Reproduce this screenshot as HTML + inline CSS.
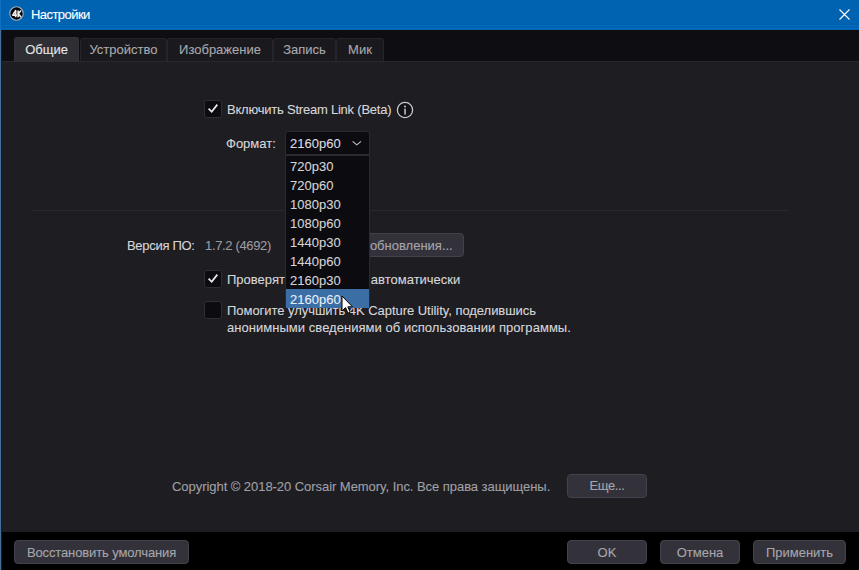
<!DOCTYPE html>
<html><head><meta charset="utf-8">
<style>
*{box-sizing:border-box;margin:0;padding:0}
html,body{width:859px;height:570px;overflow:hidden;background:#000}
body{position:relative;font-family:"Liberation Sans",sans-serif;font-size:13px;line-height:15px;color:#d7d7da;-webkit-text-stroke:0.1px}
.a{position:absolute;white-space:nowrap}
#title{left:0;top:0;width:859px;height:30px;background:#0063b1}
#lb{left:0;top:30px;width:1px;height:540px;background:#46709b;box-shadow:1px 0 0 #08203c}
#strip{left:1px;top:30px;width:858px;height:32px;background:#0e0d12}
#content{left:1px;top:62px;width:858px;height:470px;background:#1e1d22}
#footer{left:1px;top:532px;width:858px;height:38px;background:#000}
.tab{position:absolute;top:38px;height:23px;background:#1a191e;border:1px solid #25242a;border-bottom:none;border-radius:3px 3px 0 0;color:#a9a9ae;text-align:center;padding-top:3px}
.tab.act{top:37px;height:25px;background:#2f2e35;border-color:#34333a;color:#e6e6e8;padding-top:4px}
.cb{position:absolute;width:18px;height:18px;background:#0c0b0f;border:1px solid #2f2e34;border-radius:3px}
.btn{position:absolute;height:24px;background:#33323b;border:1px solid #43424a;border-radius:4px;color:#a6a6ac;text-align:center;padding-top:4px}
.dd{position:absolute;left:286px;width:83px;height:19px;color:#d4d4d8;padding-left:4px;padding-top:3px}
</style></head><body>
<div class="a" id="title"></div>
<div class="a" id="strip"></div>
<div class="a" id="content"></div>
<div class="a" style="left:1px;top:61px;width:858px;height:1px;background:#29282e"></div>
<div class="a" id="footer"></div>
<div class="a" id="lb"></div>
<div class="a" style="left:0;top:25px;width:859px;height:1px;background:#0468bb"></div>
<div class="a" style="left:0;top:28px;width:859px;height:1px;background:#066bc0"></div>
<div class="a" style="left:0;top:0;width:1px;height:30px;background:#1170c4"></div>

<!-- title bar -->
<svg class="a" style="left:9px;top:6px" width="15" height="15" viewBox="0 0 15 15">
  <circle cx="7.5" cy="7.5" r="6.7" fill="#040406" stroke="#9fb1c6" stroke-width="1.1"/>
  <path d="M6.7 11.2 V4.4 L3.7 9.1 H7.9 M9.1 4.4 V11.2 M12 4.4 L9.4 7.7 L12.1 11.2" fill="none" stroke="#f0f0f0" stroke-width="1.55" stroke-linejoin="round"/>
</svg>
<div class="a" style="left:31px;top:7px;color:#ffffff;letter-spacing:-0.55px">Настройки</div>
<svg class="a" style="left:839px;top:9px" width="11" height="11" viewBox="0 0 11 11">
  <path d="M0.5 0.5 L10.5 10.5 M10.5 0.5 L0.5 10.5" stroke="#ffffff" stroke-width="1.1"/>
</svg>

<!-- tabs -->
<div class="tab act" style="left:14px;width:65px">Общие</div>
<div class="tab" style="left:80px;width:87px">Устройство</div>
<div class="tab" style="left:167px;width:106px">Изображение</div>
<div class="tab" style="left:273px;width:63px">Запись</div>
<div class="tab" style="left:336px;width:48px">Мик</div>

<!-- stream link -->
<div class="cb" style="left:204px;top:100px"></div>
<svg class="a" style="left:205px;top:101px" width="16" height="16" viewBox="0 0 16 16">
  <path d="M3.6 7.7 L6.7 10.8 L12.3 3.6" fill="none" stroke="#ececee" stroke-width="1.75"/>
</svg>
<div class="a" style="left:227px;top:102px;letter-spacing:-0.22px">Включить Stream Link (Beta)</div>
<svg class="a" style="left:396px;top:101px" width="18" height="18" viewBox="0 0 18 18">
  <circle cx="9" cy="9" r="7.6" fill="#131217" stroke="#c9c9cc" stroke-width="1.3"/>
  <circle cx="9" cy="5.6" r="1" fill="#c9c9cc"/>
  <rect x="8.3" y="7.6" width="1.5" height="6" fill="#c9c9cc"/>
</svg>

<div class="a" style="left:226px;top:136px">Формат:</div>
<div class="a" style="left:285px;top:131px;width:85px;height:24px;background:#0c0b0f;border:1px solid #2b2a30;border-radius:3px 3px 0 0"></div>
<div class="a" style="left:290px;top:136px;color:#dcdce0">2160p60</div>
<svg class="a" style="left:351px;top:140px" width="12" height="7" viewBox="0 0 12 7">
  <path d="M1.6 1.3 L5.8 4.9 L10 1.3" fill="none" stroke="#c4c4c8" stroke-width="1.05"/>
</svg>

<!-- separator -->
<div class="a" style="left:32px;top:210px;width:757px;height:1px;background:#2a292f"></div>

<!-- version -->
<div class="a" style="left:127px;top:238px;letter-spacing:-0.3px">Версия ПО:</div>
<div class="a" style="left:205px;top:238px;color:#9b9ba0;letter-spacing:-0.35px">1.7.2 (4692)</div>
<div class="btn" style="left:290px;top:233px;width:174px">Проверить обновления...</div>

<div class="cb" style="left:204px;top:270px"></div>
<svg class="a" style="left:205px;top:271px" width="16" height="16" viewBox="0 0 16 16">
  <path d="M3.6 7.7 L6.7 10.8 L12.3 3.6" fill="none" stroke="#ececee" stroke-width="1.75"/>
</svg>
<div class="a" style="left:227px;top:272px">Проверять обновления автоматически</div>

<div class="cb" style="left:204px;top:301px"></div>
<div class="a" style="left:227px;top:302px;line-height:17px"><span style="letter-spacing:-0.04px">Помогите улучшить 4K Capture Utility, поделившись</span><br><span style="letter-spacing:0.04px">анонимными сведениями об использовании программы.</span></div>

<!-- copyright -->
<div class="a" style="left:172px;top:479px;color:#a0a0a6;letter-spacing:-0.05px">Copyright © 2018-20 Corsair Memory, Inc. Все права защищены.</div>
<div class="btn" style="left:567px;top:474px;width:80px;height:24px;letter-spacing:-0.4px;padding-top:3px">Еще...</div>

<!-- footer buttons -->
<div class="btn" style="left:14px;top:540px;width:175px;letter-spacing:-0.12px">Восстановить умолчания</div>
<div class="btn" style="left:567px;top:540px;width:80px">OK</div>
<div class="btn" style="left:660px;top:540px;width:80px">Отмена</div>
<div class="btn" style="left:753px;top:540px;width:93px">Применить</div>

<!-- dropdown list -->
<div class="a" style="left:285px;top:155px;width:85px;height:153px;background:#0c0b0f;border:1px solid #2b2a30;border-bottom:none"></div>
<div class="dd" style="top:156px">720p30</div>
<div class="dd" style="top:175px">720p60</div>
<div class="dd" style="top:194px">1080p30</div>
<div class="dd" style="top:213px">1080p60</div>
<div class="dd" style="top:232px">1440p30</div>
<div class="dd" style="top:251px">1440p60</div>
<div class="dd" style="top:270px">2160p30</div>
<div class="dd" style="top:289px;width:83px;background:#3a6ea5;color:#e8eef6">2160p60</div>

<!-- cursor -->
<svg class="a" style="left:341px;top:295px" width="13" height="20" viewBox="0 0 13 20">
  <path d="M1 1 L1 16 L4.5 12.6 L7 18.2 L9.2 17.2 L6.8 11.8 L11.5 11.8 Z" fill="#ffffff" stroke="#000000" stroke-width="1"/>
</svg>
</body></html>
